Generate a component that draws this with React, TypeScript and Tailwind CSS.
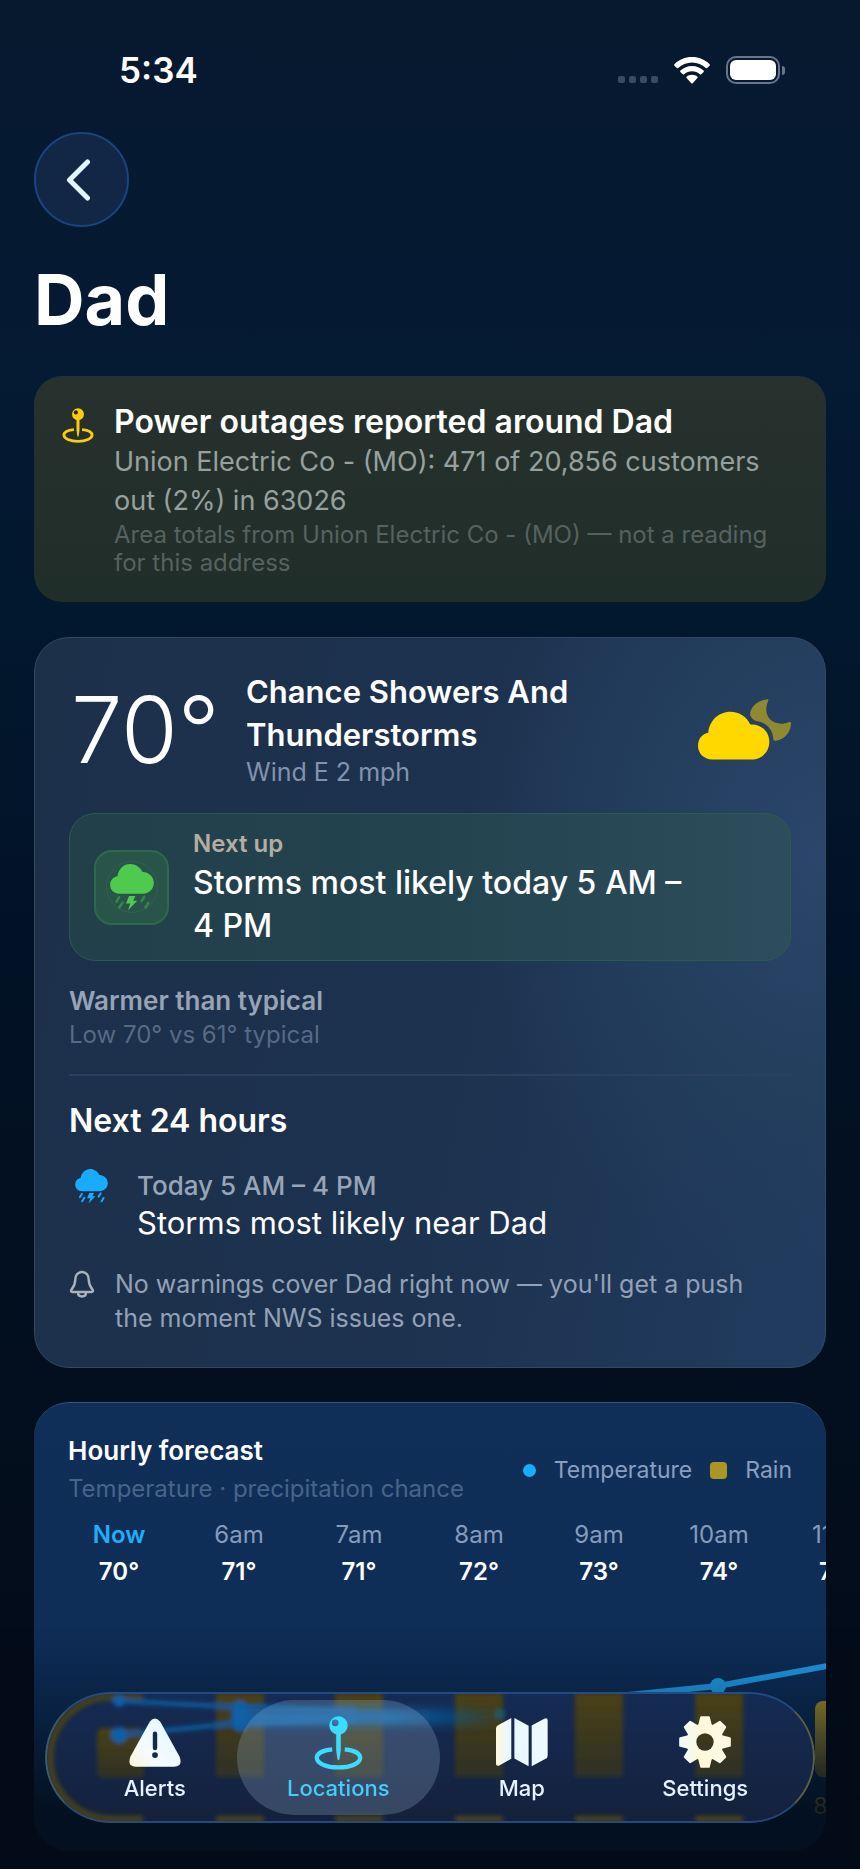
import React from 'react';
import { clsx } from 'clsx';

interface IconProps {
  className?: string;
}

interface HourItem {
  label: string;
  temp: string;
  rain?: string;
}

const hours: HourItem[] = [
  { label: 'Now', temp: '70°' },
  { label: '6am', temp: '71°' },
  { label: '7am', temp: '71°' },
  { label: '8am', temp: '72°' },
  { label: '9am', temp: '73°' },
  { label: '10am', temp: '74°' },
  { label: '11am', temp: '76°', rain: '80%' },
];

/* Icons */

const PinIcon: React.FC<IconProps> = ({ className }) => (
  <svg viewBox="0 0 146 164" className={className} fill="currentColor" aria-hidden="true">
    <path
      fillRule="evenodd"
      d="M73 1a28 28 0 1 0 0 56a28 28 0 1 0 0-56zM63 11a10 10 0 1 1 0 20a10 10 0 1 1 0-20z"
    />
    <path d="M66 54H80V104L76 131Q73 138 70 131L66 104Z" />
    <path
      d="M54 101C25 104 7 114 7 127C7 144 36 156 73 156S139 144 139 127C139 114 121 104 92 101"
      fill="none"
      stroke="currentColor"
      strokeWidth="13"
    />
  </svg>
);

const StormIcon: React.FC<IconProps & { faintDrops?: boolean }> = ({ className, faintDrops }) => (
  <svg viewBox="0 0 132 142" className={className} fill="currentColor" aria-hidden="true">
    <path d="M27 90C12 90 0 79 0 63C0 49 10 39 22 37C26 14 41 0 60 0C77 0 91 10 98 24C117 24 132 39 132 57C132 76 118 90 99 90Z" />
    <path d="M57 97H76L70 111H82L54 140L61 119H48Z" />
    <path
      d="M27 101L19 114M37 117L28 131M103 99L95 112M115 118L107 131"
      stroke="currentColor"
      strokeWidth="8"
      strokeLinecap="round"
      opacity={faintDrops ? 0.4 : 1}
    />
  </svg>
);

const CloudMoonIcon: React.FC<IconProps> = ({ className }) => (
  <svg viewBox="0 0 279 182" className={className} aria-hidden="true">
    <path
      fill="#ffd800"
      d="M42 181C18 181 0 163 0 140C0 119 13 104 31 101C33 66 62 38 97 38C124 38 146 53 157 76C190 74 214 98 214 128C214 158 191 181 163 181Z"
    />
    <path
      fill="#8f8a31"
      d="M209 0C182 3 156 22 156 48Q165 64 178 66C205 70 226 92 226 122Q227 126 234 125C260 120 279 98 279 72Q278 66 272 69C240 82 202 66 205 26Q206 14 211 4Q212 0 209 0Z"
    />
  </svg>
);

const BellIcon: React.FC<IconProps> = ({ className }) => (
  <svg viewBox="0 0 26 28" className={className} fill="none" stroke="currentColor" strokeWidth="2.4" aria-hidden="true">
    <path
      strokeLinejoin="round"
      d="M13 2C8.500 2 6.300 5.500 6.300 9.500C6.300 15 4.500 17 2.500 19.500C1.500 21 2 22 3.500 22H22.500C24 22 24.500 21 23.500 19.500C21.500 17 19.700 15 19.700 9.500C19.700 5.500 17.500 2 13 2Z"
    />
    <path d="M9 22.500C9 25.200 10.800 26.500 13 26.500S17 25.200 17 22.500" />
  </svg>
);

const AlertIcon: React.FC<IconProps> = ({ className }) => (
  <svg viewBox="0 0 153 153" className={className} aria-hidden="true">
    <path
      fill="url(#alertFill)"
      d="M61 17Q76 -2 92 17L149 120Q159 149 133 149H20Q-6 149 4 120Z"
    />
    <path d="M76.500 52V94" stroke="#15294a" strokeWidth="13" strokeLinecap="round" />
    <circle cx="76.500" cy="115" r="8.500" fill="#15294a" />
    <defs>
      <linearGradient id="alertFill" x1="0" y1="1" x2="1" y2="0">
        <stop offset="0" stopColor="#fbf6dc" />
        <stop offset="0.350" stopColor="#f4fbff" />
        <stop offset="1" stopColor="#dff7ff" />
      </linearGradient>
    </defs>
  </svg>
);

const MapIcon: React.FC<IconProps> = ({ className }) => (
  <svg viewBox="0 0 153 153" className={className} fill="url(#mapFill)" aria-hidden="true">
    <defs>
      <linearGradient id="mapFill" x1="0" y1="0" x2="153" y2="0" gradientUnits="userSpaceOnUse">
        <stop offset="0" stopColor="#fff8dc" />
        <stop offset="0.250" stopColor="#e9f8ff" />
        <stop offset="1" stopColor="#eefaff" />
      </linearGradient>
    </defs>
    <path d="M0 37Q0 30 6 27L45 6V126L11 145Q0 150 0 140Z" />
    <path d="M54 6L96 29V148L54 125Z" />
    <path d="M105 28L142 8Q152 4 152 13V116Q152 123 146 126L105 148Z" />
  </svg>
);

const GearIcon: React.FC<IconProps> = ({ className }) => (
  <svg viewBox="-78 -78 156 156" className={className} aria-hidden="true">
    <defs>
      <linearGradient id="gearFill" x1="-78" y1="0" x2="78" y2="0" gradientUnits="userSpaceOnUse">
        <stop offset="0" stopColor="#edfaff" />
        <stop offset="0.400" stopColor="#fff8dc" />
        <stop offset="1" stopColor="#fbf8e4" />
      </linearGradient>
      <mask id="gearMask">
        <circle r="56" fill="white" />
        {[0, 45, 90, 135, 180, 225, 270, 315].map((angle) => (
          <path
            key={angle}
            d="M-17 -50L-11 -74H11L17 -50Z"
            fill="white"
            stroke="white"
            strokeWidth="7"
            strokeLinejoin="round"
            transform={`rotate(${angle})`}
          />
        ))}
        <circle r="26" fill="black" />
      </mask>
    </defs>
    <rect x="-78" y="-78" width="156" height="156" fill="url(#gearFill)" mask="url(#gearMask)" />
  </svg>
);

/* Sections */

const StatusBar: React.FC = () => (
  <div className="flex items-center justify-between pt-[49px] pr-[41px] pl-[85px]">
    <span className="text-[35px] leading-[42px] font-semibold">5:34</span>
    <div className="flex items-center">
      <div className="mt-[18px] mr-4 flex gap-1">
        {[0, 1, 2, 3].map((dot) => (
          <span key={dot} className="h-[7px] w-[7px] rounded-[2px] bg-[#3a4a60]" />
        ))}
      </div>
      <svg viewBox="0 0 36 27" className="mr-4 h-[27px] w-9" fill="white" aria-hidden="true">
        <path d="M18 0C11 0 4.800 2.700 .4 7.200Q-.2 8 .5 8.700L2.800 11Q3.500 11.600 4.200 11C7.800 7.500 12.600 5.400 18 5.400S28.200 7.500 31.800 11Q32.500 11.600 33.200 11L35.500 8.700Q36.200 8 35.600 7.200C31.200 2.700 25 0 18 0Z" />
        <path d="M18 9C13.500 9 9.400 10.700 6.400 13.600Q5.700 14.300 6.400 15L8.800 17.300Q9.400 17.900 10.100 17.300C12.200 15.400 15 14.200 18 14.200S23.800 15.400 25.900 17.300Q26.600 17.900 27.200 17.300L29.600 15Q30.300 14.300 29.600 13.600C26.600 10.700 22.500 9 18 9Z" />
        <path d="M18 17.800C15.900 17.800 14 18.500 12.600 19.700Q11.900 20.400 12.600 21.100L17.300 26.200Q18 26.900 18.700 26.200L23.400 21.100Q24.100 20.400 23.400 19.700C22 18.500 20.100 17.800 18 17.800Z" />
      </svg>
      <div className="flex items-center gap-[2px]">
        <div className="h-7 w-[54px] rounded-[10px] border-2 border-[#68758a] p-[2px]">
          <div className="h-full rounded-[6px] bg-white" />
        </div>
        <span className="h-[9px] w-[3px] rounded-r-full bg-[#68758a]" />
      </div>
    </div>
  </div>
);

const OutageCard: React.FC = () => (
  <section className="flex gap-5 rounded-[28px] border-t border-[#1f3342] bg-linear-to-b from-[#27312d] to-[#202e2a] pt-[25px] pr-8 pb-[25px] pl-7">
    <PinIcon className="mt-[6px] h-[35px] w-8 shrink-0 text-[#ffcb0d]" />
    <div>
      <h2 className="text-[32px] leading-10 font-semibold">Power outages reported around Dad</h2>
      <p className="text-[27px] leading-[39px] text-[#97a09e]">
        Union Electric Co - (MO): 471 of 20,856 customers out (2%) in 63026
      </p>
      <p className="mt-px text-[24px] leading-7 text-[#56625f]">
        Area totals from Union Electric Co - (MO) — not a reading for this address
      </p>
    </div>
  </section>
);

const CurrentCard: React.FC = () => (
  <section className="mt-[35px] rounded-[35px] border border-[#34495f] bg-[radial-gradient(ellipse_45%_60%_at_100%_30%,#2c456c_0%,#243e5e_50%,transparent_100%),linear-gradient(100deg,#1c304a_0%,#1d324f_55%,#213c60_100%)] px-[34px] py-8">
    <div className="flex items-center">
      <span className="w-[177px] pl-[2px] text-[92px] leading-[92px] font-light">70°</span>
      <div className="flex-1">
        <h2 className="max-w-[350px] text-[31px] leading-[43px] font-semibold">
          Chance Showers And Thunderstorms
        </h2>
        <p className="text-[25px] leading-[33px] text-[#8393ae]">Wind E 2 mph</p>
      </div>
      <CloudMoonIcon className="h-[61px] w-[93px] shrink-0" />
    </div>

    <div className="mt-[24px] flex items-center gap-6 rounded-[26px] border border-[#2b5a50] bg-linear-to-r from-[#22404a] via-[#23434f] to-[#2d4d5c] py-[13px] pr-20 pl-6">
      <div className="flex h-[75px] w-[75px] shrink-0 items-center justify-center rounded-[18px] border-2 border-[#2d6a4b] bg-[#28544a]">
        <div className="flex h-[52px] w-[52px] items-center justify-center rounded-full border border-[#306050]">
          <StormIcon className="h-[47px] w-11 text-[#50ca4e]" faintDrops />
        </div>
      </div>
      <div>
        <p className="text-[24px] leading-[34px] font-semibold text-[#b5ada3]">Next up</p>
        <p className="text-[32px] leading-[43px] font-medium">
          Storms most likely today 5&nbsp;AM – 4&nbsp;PM
        </p>
      </div>
    </div>

    <p className="mt-[23px] text-[26px] leading-[34px] font-semibold text-[#98a4b5]">Warmer than typical</p>
    <p className="text-[24px] leading-[34px] text-[#576a85]">Low 70° vs 61° typical</p>

    <h3 className="mt-[22px] border-t-2 border-[#2a405c] pt-[25px] text-[32px] leading-10 font-semibold">
      Next 24 hours
    </h3>
    <div className="mt-7 flex">
      <div className="w-[68px] shrink-0 pl-[6px]">
        <StormIcon className="h-[35px] w-[33px] text-[#18abff]" />
      </div>
      <div>
        <p className="text-[26px] leading-[34px] font-medium text-[#98a5b8]">Today 5 AM – 4 PM</p>
        <p className="text-[31px] leading-10">Storms most likely near Dad</p>
      </div>
    </div>
    <div className="mt-6 flex gap-5 pr-10 text-[25px] leading-[34px] text-[#93a1b6]">
      <BellIcon className="mt-[3px] h-7 w-[26px] shrink-0 text-[#aab3bd]" />
      <p>No warnings cover Dad right now — you'll get a push the moment NWS issues one.</p>
    </div>
  </section>
);

const HourlyChart: React.FC = () => (
  <svg viewBox="0 0 860 200" className="block h-[200px] w-[860px]" aria-hidden="true">
    <defs>
      <linearGradient id="rainBar" x1="0" y1="0" x2="0" y2="1">
        <stop offset="0" stopColor="#a79427" />
        <stop offset="1" stopColor="#6c6a3e" />
      </linearGradient>
    </defs>
    {[119, 239, 359, 478, 598, 718, 839].map((x, index) => (
      <rect
        key={x}
        x={x - 24}
        y={index === 0 ? 138 : 112}
        width="48"
        height={index === 0 ? 50 : 76}
        rx="8"
        fill="url(#rainBar)"
      />
    ))}
    <path d="M119 142L239 134L359 130L478 124L598 109L718 97L838 75" fill="none" stroke="#1fa2f0" strokeWidth="6" />
    <circle cx="718" cy="97" r="8" fill="#1fa2f0" />
  </svg>
);

const HourlyCard: React.FC = () => (
  <section className="mt-[34px] overflow-hidden rounded-[35px] border-t border-[#31587e] bg-linear-to-b from-[#0f2f59] to-[#0d2d57] pt-[31px]">
    <div className="flex items-center justify-between px-[34px]">
      <div>
        <h2 className="text-[26px] leading-[34px] font-semibold">Hourly forecast</h2>
        <p className="mt-1 text-[24px] leading-[34px] text-[#486488]">Temperature · precipitation chance</p>
      </div>
      <div className="flex items-center gap-[18px] text-[23px] leading-[34px] text-[#8a9fc0]">
        <span className="flex items-center gap-[18px]">
          <span className="h-[13px] w-[13px] rounded-full bg-[#1aacff]" />
          Temperature
        </span>
        <span className="flex items-center gap-[18px]">
          <span className="h-[17px] w-[17px] rounded-[4px] bg-[#ab9526]" />
          Rain
        </span>
      </div>
    </div>

    <div className="mt-3 flex pl-[25px]">
      {hours.map((hour, index) => (
        <div key={hour.label} className="w-[120px] shrink-0 text-center text-[24px] leading-[34px]">
          <p className={index === 0 ? 'font-semibold text-[#22adf6]' : 'text-[#879bbb]'}>{hour.label}</p>
          <p className="mt-[3px] font-semibold">{hour.temp}</p>
        </div>
      ))}
    </div>
    <div className="-ml-[34px]">
      <HourlyChart />
    </div>
    <div className="flex h-[62px] pl-[25px]">
      {hours.map((hour) => (
        <span key={hour.label} className="w-[120px] shrink-0 text-center text-[23px] leading-[34px] text-[#c9ae2c]">
          {hour.rain}
        </span>
      ))}
    </div>
  </section>
);

/* Chart colours bent through the glass of the tab bar */
const GlassReflection: React.FC = () => (
  <svg
    viewBox="0 0 770 131"
    preserveAspectRatio="none"
    className="pointer-events-none absolute inset-0 h-full w-full"
    aria-hidden="true"
  >
    <defs>
      <linearGradient id="glassBar" x1="0" y1="0" x2="0" y2="1">
        <stop offset="0" stopColor="#4a4116" />
        <stop offset="1" stopColor="#2e3026" />
      </linearGradient>
      <linearGradient id="glassLine" x1="70" y1="0" x2="460" y2="0" gradientUnits="userSpaceOnUse">
        <stop offset="0" stopColor="#0a5fa8" />
        <stop offset="0.700" stopColor="#0a62a4" />
        <stop offset="1" stopColor="#0a62a4" stopOpacity="0" />
      </linearGradient>
      <filter id="glassSoft" x="-20%" y="-50%" width="140%" height="200%">
        <feGaussianBlur stdDeviation="2" />
      </filter>
      <filter id="glassBlur" filterUnits="userSpaceOnUse" x="150" y="-20" width="360" height="90">
        <feGaussianBlur stdDeviation="5" />
      </filter>
    </defs>
    <g filter="url(#glassSoft)">
      <rect x="52" y="36" width="47" height="50" rx="6" fill="url(#glassBar)" />
      {[171, 290, 410, 530, 650].map((x) => (
        <g key={x}>
          <rect x={x} y="1" width="48" height="84" fill="url(#glassBar)" />
          <rect x={x} y="124" width="48" height="6" fill="#4a421b" />
        </g>
      ))}
      <path d="M98 5H66A60 60 0 0 0 66 127H98" fill="none" stroke="#453f1c" strokeWidth="7" />
      <path d="M74 9L195 15L310 19M74 43L195 31L310 27" fill="none" stroke="#0a5697" strokeWidth="5" />
      <circle cx="74" cy="9" r="6" fill="#0a5fa8" />
      <circle cx="74" cy="43" r="8" fill="#0a5fa8" />
      <rect x="188" y="9" width="14" height="30" rx="7" fill="#0a5fa8" />
      <circle cx="455" cy="22" r="5" fill="#1d5a5c" />
    </g>
    <path d="M190 25H460" stroke="url(#glassLine)" strokeWidth="16" filter="url(#glassBlur)" />
  </svg>
);

const tabs = [
  { label: 'Alerts', icon: AlertIcon },
  { label: 'Locations', icon: PinIcon, active: true },
  { label: 'Map', icon: MapIcon },
  { label: 'Settings', icon: GearIcon },
];

const TabBar: React.FC = () => (
  <nav className="fixed right-[45px] bottom-[46px] left-[45px] overflow-hidden rounded-full bg-linear-to-b from-[#152b54] to-[#14213c]">
    <GlassReflection />
    <div className="relative grid grid-cols-4 rounded-full border-2 border-[#26528c]/80 border-r-[#5b6044] border-l-[#3a5a70] px-4 py-[6px]">
      {tabs.map(({ label, icon: Icon, active }) => (
        <button
          key={label}
          type="button"
          aria-current={active ? 'page' : undefined}
          className={clsx(
            '-mx-[10px] flex h-[115px] flex-col items-center rounded-full pt-4 text-[22px] font-medium',
            active ? 'bg-[#a8c8e0]/23 text-[#44cdfb]' : 'text-[#e6f2ff]'
          )}
        >
          <Icon className={active ? 'h-[54px] w-[49px] text-[#3bdcff]' : 'h-[52px] w-[52px]'} />
          <span className={clsx('leading-7', active ? 'mt-1' : 'mt-[6px]')}>{label}</span>
        </button>
      ))}
    </div>
  </nav>
);

const App: React.FC = () => {
  return (
    <div className="min-h-screen bg-[linear-gradient(#06192f_0%,#051a33_20%,#02182e_33%,#021226_50%,#030f1e_75%,#030815_100%)] px-[34px] pb-[15px] font-['Inter','Liberation_Sans',sans-serif] text-white">
      <StatusBar />
      <header className="pt-[41px]">
        <button
          type="button"
          aria-label="Back"
          className="flex h-[95px] w-[95px] items-center justify-center rounded-full border-2 border-[#1b4482] bg-[#122746]"
        >
          <svg viewBox="0 0 24 42" className="mr-[7px] h-[42px] w-6" fill="none" aria-hidden="true">
            <path d="M21.500 3L3.500 21L21.500 39" stroke="#e2f6ff" strokeWidth="5" strokeLinecap="round" strokeLinejoin="round" />
          </svg>
        </button>
        <h1 className="mt-[29px] mb-[32px] text-[70px] leading-[88px] font-bold">Dad</h1>
      </header>
      <main>
        <OutageCard />
        <CurrentCard />
        <HourlyCard />
      </main>
      <div className="pointer-events-none fixed inset-x-0 bottom-0 h-[240px] bg-linear-to-b from-[#030c18]/0 via-[#030c18]/30 via-30% to-[#030c18]/85 to-75%" />
      <TabBar />
    </div>
  );
};

export default App;
